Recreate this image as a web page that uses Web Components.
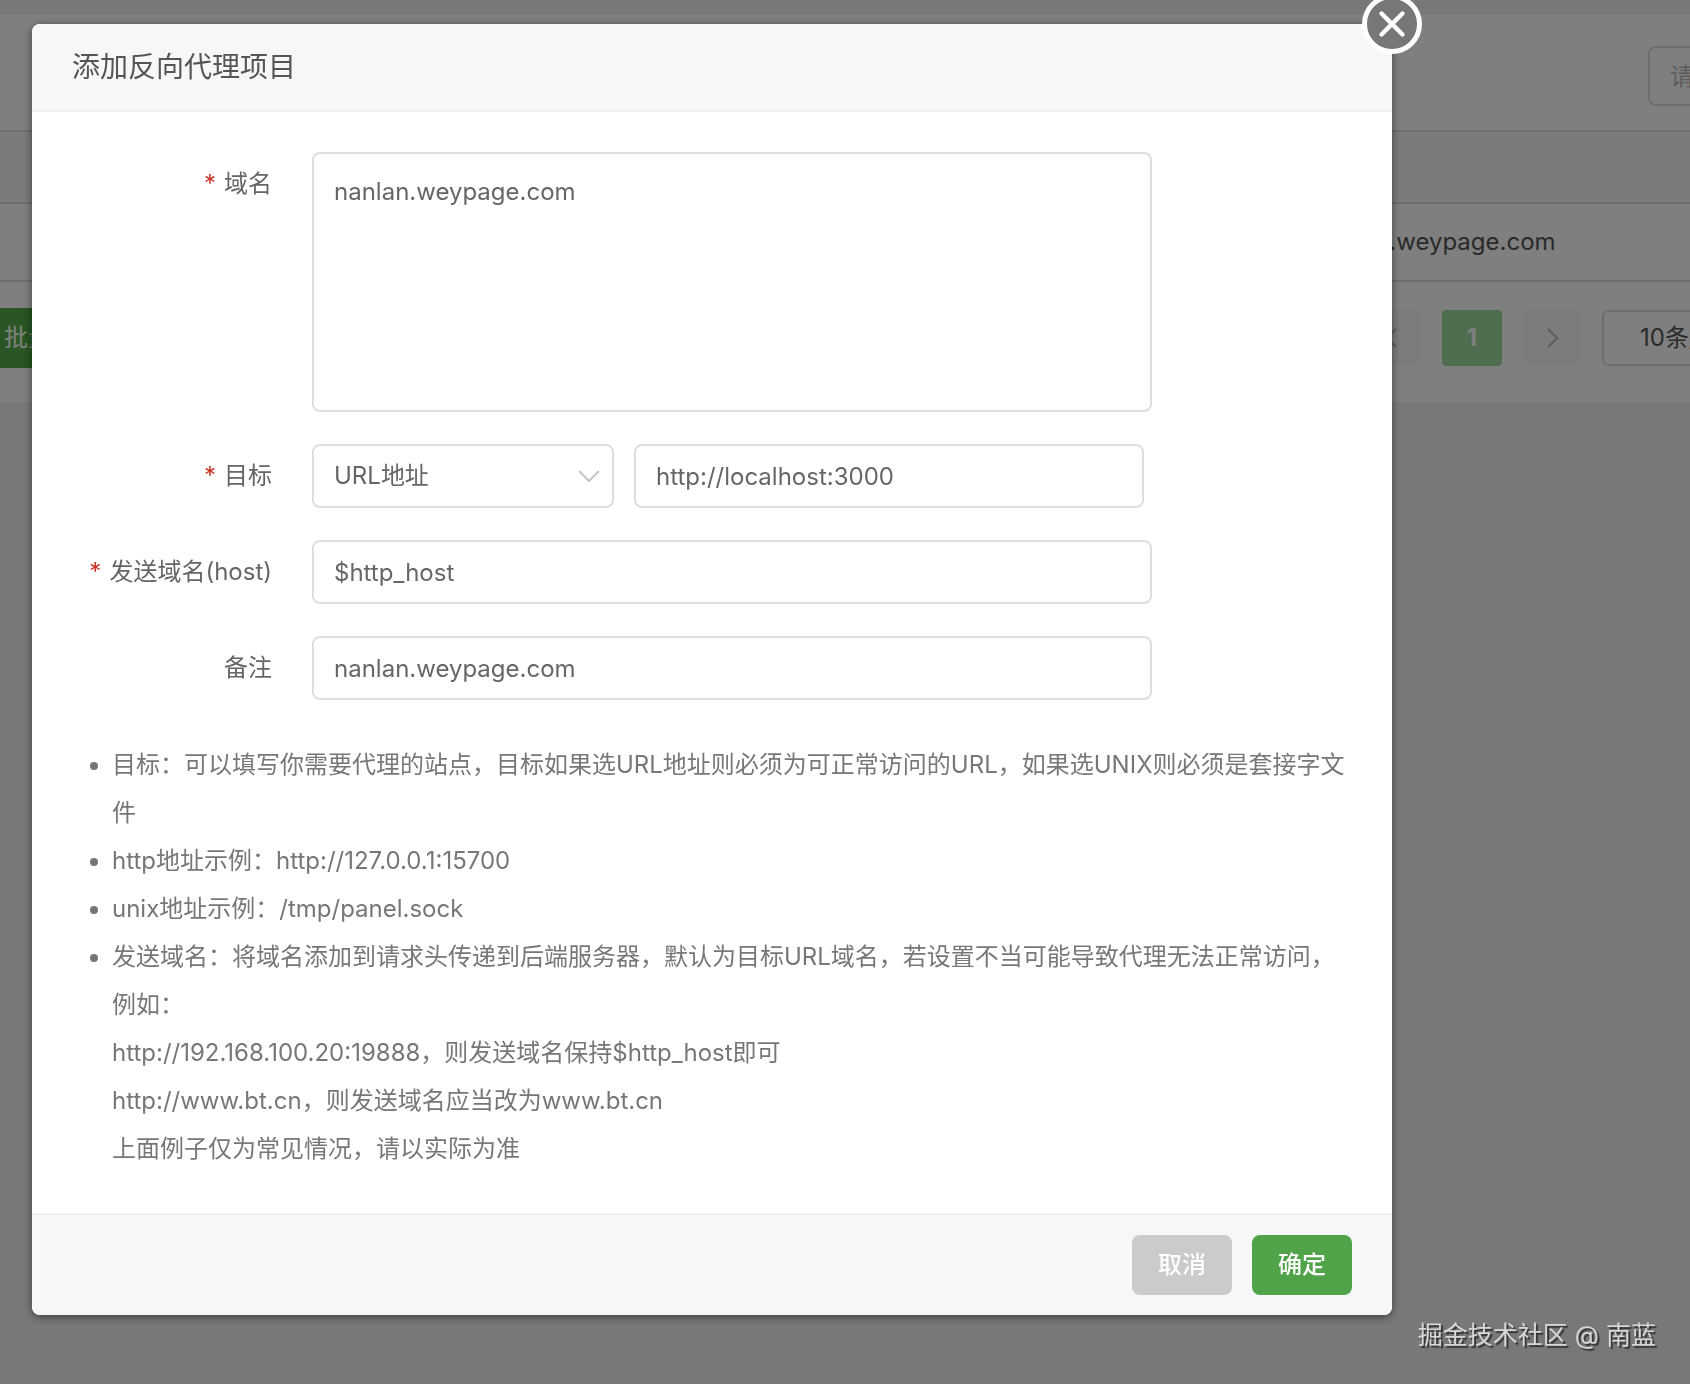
<!DOCTYPE html>
<html lang="zh-CN">
<head>
<meta charset="utf-8">
<title>添加反向代理项目</title>
<style>
body {
    margin: 0;
    min-height: 100vh;
    overflow: hidden;
    background: #f1f1f1;
    color: #666;
    font: 24px/36px Inter, "Noto Sans CJK SC", sans-serif;
}
</style>
</head>
<body>
<project-page></project-page>
<web-modal heading="添加反向代理项目">
    <form-field type="textarea" label="域名" required value="nanlan.weypage.com"></form-field>
    <form-field type="target" label="目标" required value="http://localhost:3000"></form-field>
    <form-field label="发送域名(host)" required value="$http_host"></form-field>
    <form-field label="备注" value="nanlan.weypage.com"></form-field>
    <help-list></help-list>
    <web-button slot="footer" kind="cancel">取消</web-button>
    <web-button slot="footer" kind="primary">确定</web-button>
</web-modal>
<water-mark>掘金技术社区 @ 南蓝</water-mark>

<script>
function template(html) {
    let element = document.createElement('template');
    element.innerHTML = html;
    return element;
}

let pageTemplate = template(`
<style>
:host {
    display: block;
    padding-top: 14px;
    overflow: hidden;
}
* {
    box-sizing: border-box;
}
.card {
    width: calc(100% + 110px);
    background: #fff;
    box-shadow: 0 2px 6px rgba(0, 0, 0, .1);
}
.toolbar {
    display: flex;
    justify-content: flex-end;
    padding: 32px 0 24px;
}
input, select, button {
    font: inherit;
    color: #555;
    border: 2px solid #ddd;
    border-radius: 6px;
    background: #fff;
}
.toolbar input {
    width: 152px;
    height: 60px;
    padding: 0 20px;
    border-radius: 8px;
}
.toolbar input::placeholder {
    color: #bbb;
}
table {
    width: 100%;
    table-layout: fixed;
    border-collapse: collapse;
}
th, td {
    border: solid #ddd;
    border-width: 2px 0;
    padding: 0 20px;
    text-align: left;
    color: #555;
}
th {
    height: 72px;
    background: #f6f6f6;
}
td {
    height: 78px;
}
.site {
    width: 506px;
}
.footer {
    display: flex;
    align-items: center;
    padding: 26px 0 34px;
}
.batch {
    height: 60px;
    padding: 0 30px 0 4px;
    border: 0;
    border-radius: 0;
    color: #fff;
    background: #52ac46;
}
nav {
    display: flex;
    gap: 20px;
    margin-left: auto;
}
nav button {
    display: grid;
    place-items: center;
    width: 60px;
    height: 56px;
    padding: 0;
    border: 0;
    border-radius: 4px;
    background: #f8f8f8;
}
nav .current {
    color: #fff;
    background: #9cdc9f;
    font-weight: 700;
}
nav svg {
    width: 24px;
    height: 24px;
    fill: none;
    stroke: #bbb;
    stroke-width: 2;
}
nav select {
    width: 198px;
    height: 56px;
    padding: 0 36px;
    appearance: none;
}
</style>
<div class="card">
    <div class="toolbar"><input type="search" placeholder="请输入" aria-label="搜索"></div>
    <table>
        <thead><tr><th></th><th class="site"></th></tr></thead>
        <tbody><tr><td></td><td>nanlan.weypage.com</td></tr></tbody>
    </table>
    <div class="footer">
        <button class="batch" type="button">批量</button>
        <nav>
            <button type="button" aria-label="上一页"><svg viewBox="0 0 24 24"><path d="M16 3 7 12l9 9"/></svg></button>
            <button type="button" class="current">1</button>
            <button type="button" aria-label="下一页"><svg viewBox="0 0 24 24"><path d="m8 3 9 9-9 9"/></svg></button>
            <select aria-label="每页条数"><option>10条/页</option></select>
        </nav>
    </div>
</div>`);

class ProjectPage extends HTMLElement {
    connectedCallback() {
        this.attachShadow({mode: "open"});
        this.shadowRoot.appendChild(pageTemplate.content.cloneNode(true));
    }
}

let modalTemplate = template(`
<style>
:host {
    position: fixed;
    inset: 0;
    display: block;
    padding: 24px 298px 0 32px;
    background: rgba(0, 0, 0, .5);
}
:host([hidden]) {
    display: none;
}
section {
    position: relative;
    border-radius: 8px;
    background: #fff;
    box-shadow: 0 2px 8px rgba(0, 0, 0, .5);
}
header {
    padding: 25px 40px;
    border-bottom: 2px solid #f0f0f0;
    border-radius: 8px 8px 0 0;
    background: #f7f7f7;
}
h2 {
    margin: 0;
    color: #555;
    font-size: 28px;
    font-weight: 400;
}
.body {
    display: flex;
    flex-direction: column;
    gap: 32px;
    padding: 40px;
}
footer {
    display: flex;
    justify-content: flex-end;
    gap: 20px;
    padding: 20px 40px;
    border-top: 2px solid #eff1f0;
    border-radius: 0 0 8px 8px;
    background: #f6f8f8;
}
/* sits on the corner of the dialog */
.close {
    position: absolute;
    top: -30px;
    right: -30px;
    width: 60px;
    height: 60px;
    padding: 0;
    border: 0;
    background: none;
    cursor: pointer;
}
.close svg {
    display: block;
}
</style>
<section role="dialog" aria-labelledby="heading">
    <header><h2 id="heading"></h2></header>
    <div class="body"><slot></slot></div>
    <footer><slot name="footer"></slot></footer>
    <button class="close" type="button" aria-label="关闭">
        <svg width="60" height="60" viewBox="0 0 60 60">
            <circle cx="30" cy="30" r="27.5" fill="#777" stroke="#fff" stroke-width="5"/>
            <path d="M19.5 19.5l21 21M40.5 19.5l-21 21" stroke="#fff" stroke-width="4.4" stroke-linecap="round"/>
        </svg>
    </button>
</section>`);

class WebModal extends HTMLElement {
    connectedCallback() {
        this.render();
        this.bindEvents();
    }

    render() {
        this.attachShadow({mode: "open"});
        this.shadowRoot.appendChild(modalTemplate.content.cloneNode(true));
        this.shadowRoot.querySelector("h2").textContent = this.getAttribute("heading");
    }

    bindEvents() {
        this.shadowRoot.querySelector(".close").addEventListener("click", () => {
            this.hidden = true;
        });
        this.addEventListener("cancelButton", () => {
            this.hidden = true;
        });
    }
}

let fieldTemplate = template(`
<style>
:host {
    display: flex;
    align-items: flex-start;
    gap: 40px;
}
* {
    box-sizing: border-box;
}
label {
    flex: 0 0 200px;
    line-height: 64px;
    text-align: right;
    white-space: nowrap;
}
:host([required]) label::before {
    content: "*";
    margin-right: 8px;
    color: #cb3327;
}
.control {
    display: flex;
    flex: 0 1 840px;
    gap: 20px;
    min-width: 0;
}
:host([type="target"]) .control {
    flex-basis: 832px;
}
input, select, textarea {
    display: block;
    width: 100%;
    height: 64px;
    margin: 0;
    padding: 0 20px;
    border: 2px solid #ddd;
    border-radius: 8px;
    outline: none;
    background: #fff;
    color: inherit;
    font: inherit;
}
textarea {
    height: 260px;
    padding: 20px;
    resize: none;
}
select {
    appearance: none;
}
.select {
    position: relative;
    flex: 0 0 302px;
}
.select svg {
    position: absolute;
    top: 20px;
    right: 13px;
    pointer-events: none;
}
</style>
<label for="control"></label>
<div class="control"></div>`);

class FormField extends HTMLElement {
    controls = {
        text: `<input id="control" type="text">`,
        textarea: `<textarea id="control"></textarea>`,
        target: `
            <div class="select">
                <select id="control"><option>URL地址</option><option>UNIX</option></select>
                <svg width="24" height="24" viewBox="0 0 24 24" fill="none" stroke="#c4c6cb" stroke-width="2"><path d="m2 7 10 10L22 7"/></svg>
            </div>
            <input type="text" aria-label="目标地址">`
    };

    connectedCallback() {
        this.attachShadow({mode: "open"});
        this.shadowRoot.appendChild(fieldTemplate.content.cloneNode(true));
        this.shadowRoot.querySelector("label").append(this.getAttribute("label"));
        this.shadowRoot.querySelector(".control").innerHTML = this.controls[this.getAttribute("type") || "text"];
        this.shadowRoot.querySelector("input, textarea").value = this.getAttribute("value");
    }
}

let helpTemplate = template(`
<style>
:host {
    display: block;
    margin-top: 9px;
    color: #777;
    line-height: 48px;
}
ul {
    margin: 0;
    padding-left: 40px;
}
</style>
<ul>
    <li>目标：可以填写你需要代理的站点，目标如果选URL地址则必须为可正常访问的URL，如果选UNIX则必须是套接字文件</li>
    <li>http地址示例：http://127.0.0.1:15700</li>
    <li>unix地址示例：/tmp/panel.sock</li>
    <li>发送域名：将域名添加到请求头传递到后端服务器，默认为目标URL域名，若设置不当可能导致代理无法正常访问，例如：<br>
        http://192.168.100.20:19888，则发送域名保持$http_host即可<br>
        http://www.bt.cn，则发送域名应当改为www.bt.cn<br>
        上面例子仅为常见情况，请以实际为准</li>
</ul>`);

class HelpList extends HTMLElement {
    connectedCallback() {
        this.attachShadow({mode: "open"});
        this.shadowRoot.appendChild(helpTemplate.content.cloneNode(true));
    }
}

let buttonTemplate = template(`
<style>
:host {
    display: block;
}
button {
    min-width: 100px;
    height: 60px;
    padding: 0 20px;
    border: 0;
    border-radius: 8px;
    background: #51a34a;
    color: #fff;
    font: inherit;
    font-weight: 500;
    cursor: pointer;
}
:host([kind="cancel"]) button {
    background: #cbcbcb;
}
</style>
<button type="button"><slot></slot></button>`);

class WebButton extends HTMLElement {
    connectedCallback() {
        this.attachShadow({mode: "open"});
        this.shadowRoot.appendChild(buttonTemplate.content.cloneNode(true));
        this.shadowRoot.querySelector("button").addEventListener("click", () => {
            this.dispatchEvent(new CustomEvent(this.getAttribute("kind") + "Button", {bubbles: true, composed: true}));
        });
    }
}

let markTemplate = template(`
<style>
:host {
    position: fixed;
    right: 34px;
    bottom: 31px;
    color: #d6d6d6;
    font-size: 25px;
    text-shadow: 2px 2px 1px #333;
    pointer-events: none;
}
</style>
<slot></slot>`);

class WaterMark extends HTMLElement {
    connectedCallback() {
        this.attachShadow({mode: "open"});
        this.shadowRoot.appendChild(markTemplate.content.cloneNode(true));
    }
}

window.customElements.define('project-page', ProjectPage);
window.customElements.define('form-field', FormField);
window.customElements.define('help-list', HelpList);
window.customElements.define('web-button', WebButton);
window.customElements.define('web-modal', WebModal);
window.customElements.define('water-mark', WaterMark);
</script>
</body>
</html>
